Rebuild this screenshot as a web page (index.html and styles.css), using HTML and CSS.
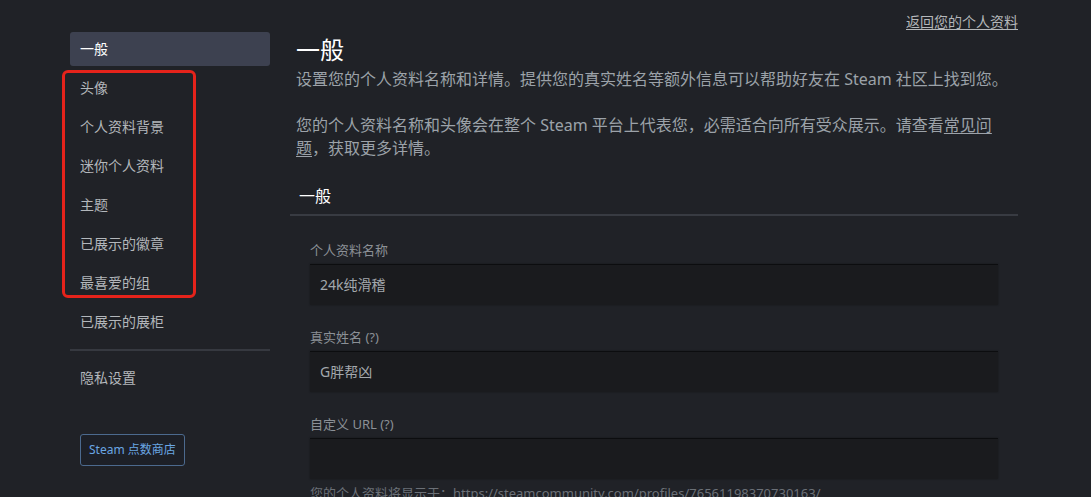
FILE: index.html
```html
<!DOCTYPE html>
<html lang="zh-CN">
<head>
<meta charset="utf-8">
<title>编辑个人资料</title>
<link rel="stylesheet" href="styles.css">
</head>
<body>
<div class="page">
  <div class="topbar"><a class="back-link" href="#">返回您的个人资料</a></div>
  <div class="layout">
    <nav class="sidebar">
      <a class="nav-item active" href="#">一般</a>
      <a class="nav-item" href="#">头像</a>
      <a class="nav-item" href="#">个人资料背景</a>
      <a class="nav-item" href="#">迷你个人资料</a>
      <a class="nav-item" href="#">主题</a>
      <a class="nav-item" href="#">已展示的徽章</a>
      <a class="nav-item" href="#">最喜爱的组</a>
      <a class="nav-item" href="#">已展示的展柜</a>
      <div class="nav-sep"></div>
      <a class="nav-item" href="#">隐私设置</a>
      <a class="points-btn" href="#">Steam 点数商店</a>
      <div class="highlight-box"></div>
    </nav>
    <main class="content">
      <h1 class="title">一般</h1>
      <p class="desc">设置您的个人资料名称和详情。提供您的真实姓名等额外信息可以帮助好友在 Steam 社区上找到您。</p>
      <p class="desc gap">您的个人资料名称和头像会在整个 Steam 平台上代表您，必需适合向所有受众展示。请查看<a href="#" class="faq">常见问题</a>，获取更多详情。</p>
      <div class="section-head">一般</div>
      <div class="form">
        <label class="label">个人资料名称</label>
        <div class="input">24k纯滑稽</div>
        <label class="label">真实姓名 (?)</label>
        <div class="input">G胖帮凶</div>
        <label class="label">自定义 URL (?)</label>
        <div class="input"></div>
        <div class="helper">您的个人资料将显示于：https://steamcommunity.com/profiles/76561198370730163/</div>
      </div>
    </main>
  </div>
</div>
</body>
</html>
```

FILE: styles.css
```css
html, body {
  margin: 0;
  padding: 0;
  background: #202227;
  height: 100%;
  overflow: hidden;
}
body {
  font-family: "Noto Sans", "Noto Sans CJK SC", sans-serif;
  color: #acb2b8;
}
a { text-decoration: none; color: inherit; }
.page {
  width: 948px;
  margin-left: 70px;
}
.topbar {
  height: 32px;
  display: flex;
  justify-content: flex-end;
  align-items: flex-start;
}
.back-link {
  margin-top: 12px;
  font-size: 14px;
  line-height: 19px;
  color: #b4b7ba;
  text-decoration: underline;
  text-underline-offset: 2px;
}
.layout {
  display: flex;
  gap: 20px;
}
.sidebar {
  position: relative;
  width: 200px;
  flex: none;
  display: flex;
  flex-direction: column;
}
.nav-item {
  display: block;
  height: 34px;
  line-height: 34px;
  padding-left: 10px;
  margin-bottom: 5px;
  font-size: 14px;
  color: #b3b7bb;
  border-radius: 3px;
}
.nav-item.active {
  background: #3d4150;
  color: #ffffff;
}
.nav-sep {
  height: 2px;
  background: #363940;
  margin: 5px 0 10px;
}
.points-btn {
  align-self: flex-start;
  margin-left: 10px;
  margin-top: 34px;
  height: 30px;
  line-height: 30px;
  padding: 0 8px;
  font-size: 12px;
  color: #6aa6e3;
  border: 1px solid #4c6a8e;
  border-radius: 3px;
  background: #1d2027;
}
.highlight-box {
  position: absolute;
  left: -8px;
  top: 38px;
  width: 128px;
  height: 222px;
  border: 3px solid #e5231b;
  border-radius: 6px;
}
.content {
  width: 728px;
}
.title {
  margin: 3px 0 0 6px;
  font-size: 24px;
  line-height: 30px;
  font-weight: 400;
  color: #ffffff;
}
.desc {
  margin: 3px 0 0 6px;
  font-size: 16px;
  line-height: 23px;
  color: #9ca2a9;
}
.desc.gap { margin-top: 23px; }
.faq { text-decoration: underline; text-underline-offset: 2px; }
.section-head {
  margin-top: 25px;
  padding: 0 0 7px 9px;
  font-size: 16px;
  line-height: 22px;
  color: #ffffff;
  border-bottom: 2px solid #383b42;
}
.form {
  padding: 0 20px;
  display: flex;
  flex-direction: column;
}
.label {
  margin-top: 25px;
  font-size: 13px;
  line-height: 18px;
  color: #8b9096;
}
.input + .label { margin-top: 23px; }
.input {
  margin-top: 5px;
  height: 40px;
  line-height: 40px;
  padding-left: 10px;
  font-size: 14px;
  color: #a3a8ad;
  background: #1a1b1e;
  border-top: 1px solid #0c0d0f;
  box-shadow: 0 0 2px rgba(0,0,0,0.35);
}
.helper {
  margin-top: 5px;
  font-size: 13px;
  line-height: 18px;
  color: #6b7077;
}
```
